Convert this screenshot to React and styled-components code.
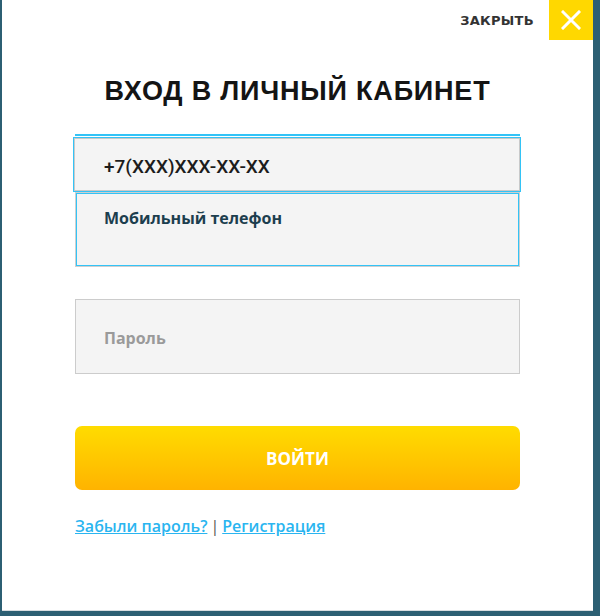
import React from "react";
import styled, { createGlobalStyle } from "styled-components";

const GlobalStyle = createGlobalStyle`
  html, body {
    margin: 0;
    padding: 0;
    background: #2c5f73;
  }
  body {
    font-family: Roboto, "Liberation Sans", Arial, sans-serif;
  }
`;

const App = () => {
  return (
    <>
      <GlobalStyle />
      <Page>
        <Modal>
          <TopBar>
            <CloseLabel>ЗАКРЫТЬ</CloseLabel>
            <CloseButton aria-label="Закрыть">
              <svg width="20" height="20" viewBox="0 0 20 20">
                <path d="M2 2 L18 18 M18 2 L2 18" stroke="#fff" strokeWidth="3" strokeLinecap="square" />
              </svg>
            </CloseButton>
          </TopBar>
          <Title>ВХОД В ЛИЧНЫЙ КАБИНЕТ</Title>
          <Form>
            <FocusLine />
            <PhoneField>+7(XXX)XXX-XX-XX</PhoneField>
            <Dropdown>
              <DropdownItem>Мобильный телефон</DropdownItem>
            </Dropdown>
            <PasswordField>Пароль</PasswordField>
            <SubmitButton>ВОЙТИ</SubmitButton>
            <Links>
              <Link href="#">Забыли пароль?</Link>
              <Divider>|</Divider>
              <Link href="#">Регистрация</Link>
            </Links>
          </Form>
        </Modal>
      </Page>
    </>
  );
};

const Page = styled.div`
  width: 600px;
  height: 616px;
  padding: 0 7px 5px 2px;
  box-sizing: border-box;
  display: flex;
`;

const Modal = styled.div`
  flex: 1;
  background: #fff;
  border-bottom: 1px solid #d8dde0;
  display: flex;
  flex-direction: column;
`;

const TopBar = styled.div`
  display: flex;
  justify-content: flex-end;
  align-items: center;
  height: 40px;
  gap: 15px;
`;

const CloseLabel = styled.span`
  font-family: "DejaVu Sans", sans-serif;
  font-size: 13px;
  font-weight: bold;
  color: #333;
  letter-spacing: 0.3px;
`;

const CloseButton = styled.div`
  width: 44px;
  height: 40px;
  background: #ffd800;
  display: flex;
  align-items: center;
  justify-content: center;
`;

const Title = styled.h1`
  margin: 33px 0 0;
  text-align: center;
  font-family: "Liberation Sans", Arial, sans-serif;
  font-weight: bold;
  font-size: 27px;
  color: #141414;
  letter-spacing: 0.8px;
  line-height: 36px;
`;

const Form = styled.div`
  margin: 25px 0 0 71px;
  width: 448px;
  display: flex;
  flex-direction: column;
`;

const FocusLine = styled.div`
  height: 2px;
  margin: 0 1px 1px 2px;
  background: #33c3f6;
`;

const PhoneField = styled.div`
  border: 1px solid #c9c9c9;
  box-shadow: 0 0 0 1px #33c3f6;
  margin: 1px;
  background: #f4f4f4;
  display: flex;
  align-items: center;
  padding: 3px 0 0 29px;
  box-sizing: content-box;
  height: 48px;
  font-size: 19px;
  font-weight: 500;
  color: #1c1c1c;
`;

const Dropdown = styled.div`
  height: 73px;
  margin: 1px 2px 0 3px;
  border: 1px solid #33c3f6;
  outline: 1px solid #cfcfcf;
  background: #f4f4f4;
  padding: 13px 0 0 27px;
  box-sizing: border-box;
`;

const DropdownItem = styled.div`
  font-family: "Open Sans", Roboto, sans-serif;
  font-size: 16px;
  font-weight: bold;
  color: #1c3e4e;
`;

const PasswordField = styled.div`
  margin: 33px 1px 0 2px;
  height: 75px;
  box-sizing: border-box;
  border: 1px solid #cccccc;
  background: #f4f4f4;
  display: flex;
  align-items: center;
  padding: 2px 0 0 28px;
  font-family: "Open Sans", Roboto, sans-serif;
  font-size: 16px;
  font-weight: bold;
  color: #9a9a9a;
`;

const SubmitButton = styled.button`
  margin: 52px 1px 0 2px;
  height: 64px;
  border: none;
  border-radius: 7px;
  background: linear-gradient(to bottom, #ffdc00, #ffb300);
  color: #fff;
  font-family: "Open Sans", Roboto, sans-serif;
  font-size: 17px;
  font-weight: bold;
  cursor: pointer;
`;

const Links = styled.div`
  margin: 25px 0 0 2px;
  display: flex;
  align-items: center;
  gap: 3px;
  font-family: "Open Sans", Roboto, sans-serif;
  font-size: 16px;
`;

const Link = styled.a`
  color: #2ab5f0;
  text-decoration: underline;
  font-weight: 600;
`;

const Divider = styled.span`
  color: #555;
`;

export default App;
